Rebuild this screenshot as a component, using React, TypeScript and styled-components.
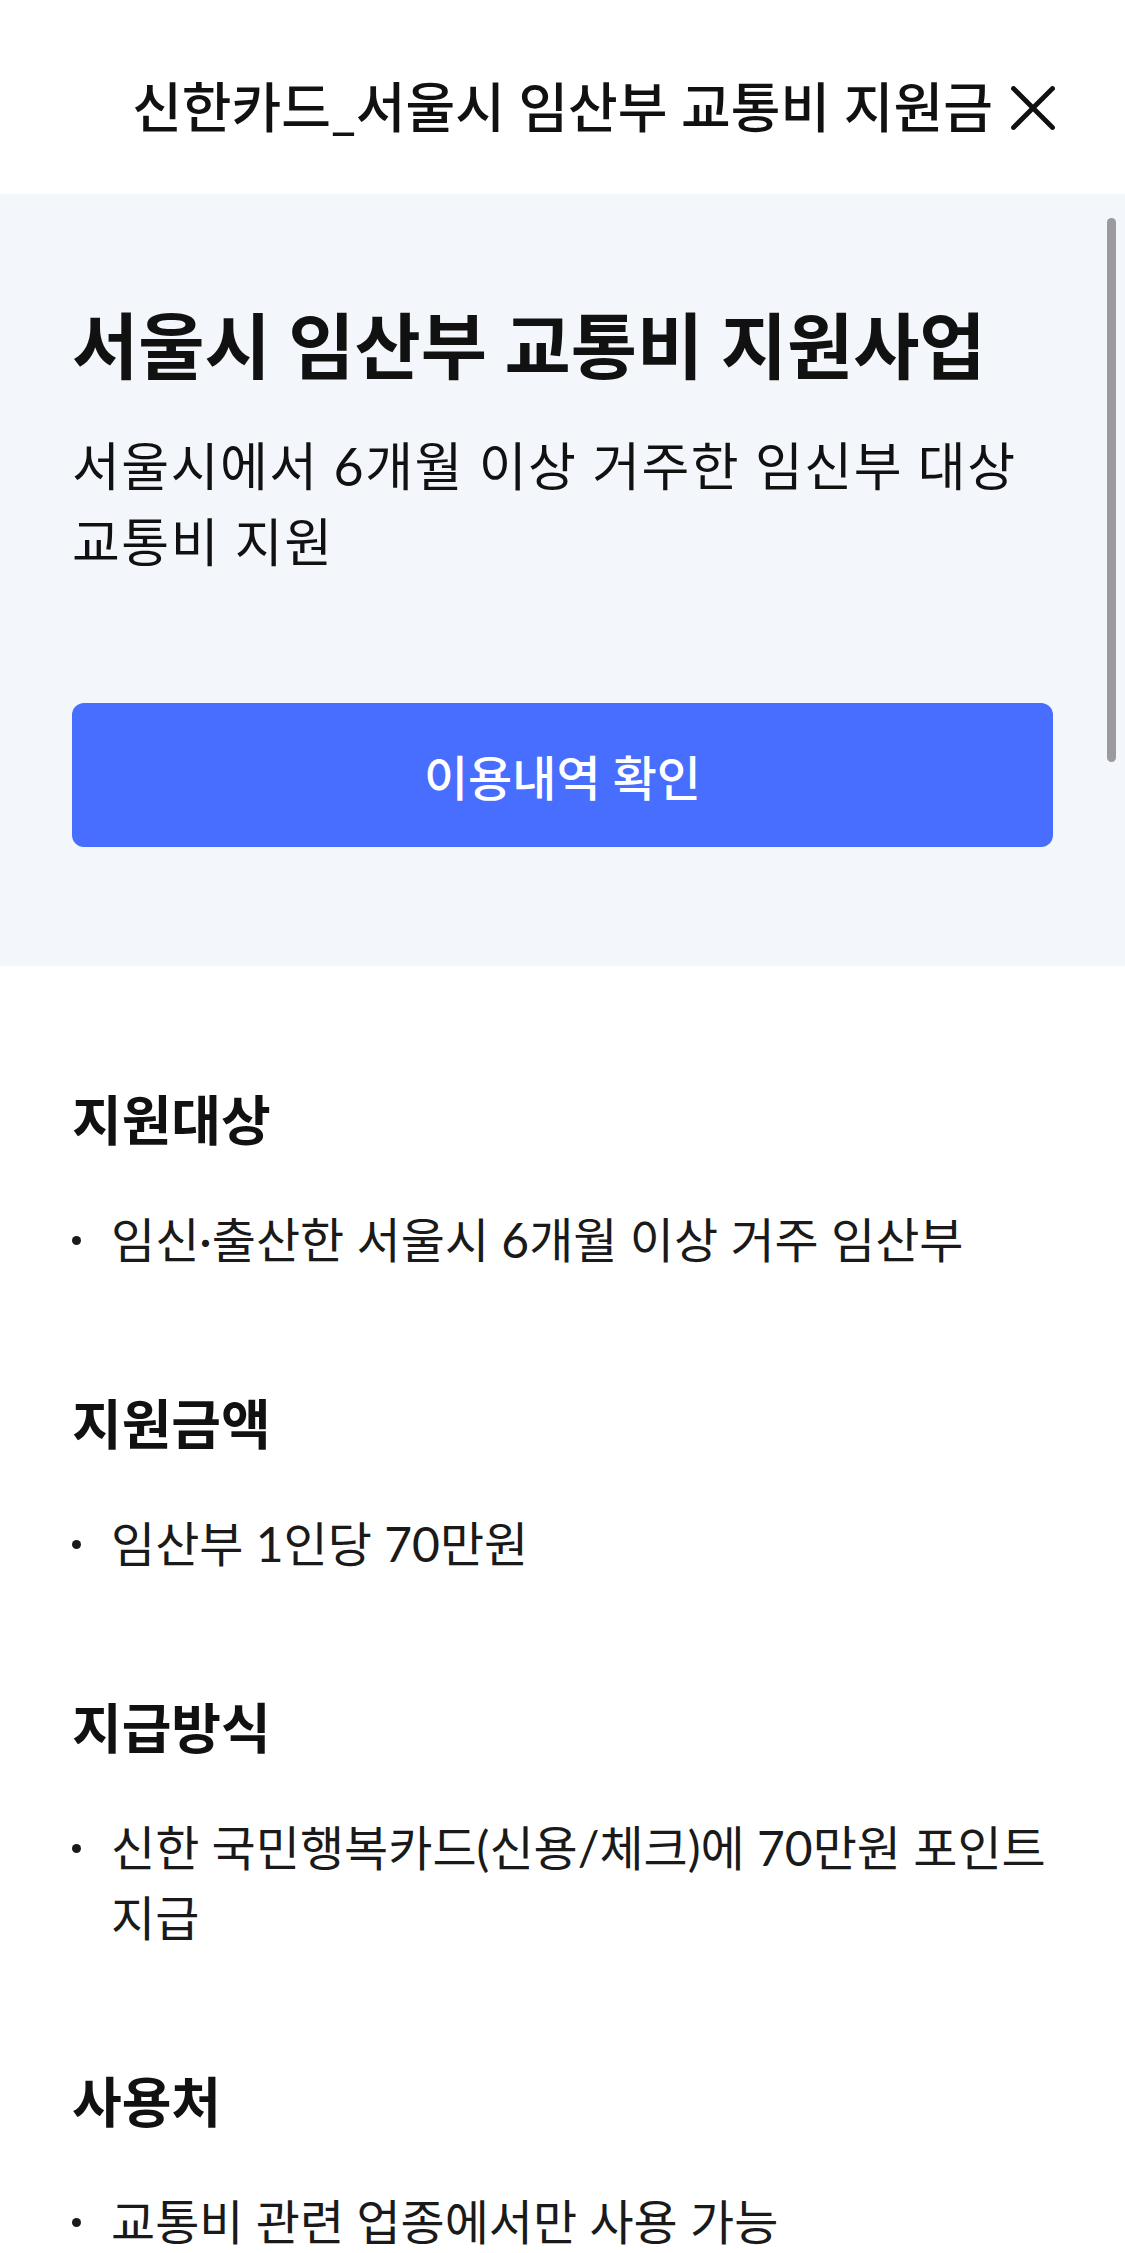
import React from 'react';
import styled, { createGlobalStyle } from 'styled-components';

// styles
const GlobalStyle = createGlobalStyle`
  html, body {
    margin: 0;
    padding: 0;
    overflow: hidden;
    background: #ffffff;
  }
  body {
    font-family: Lato, 'Noto Sans CJK KR', 'Noto Sans', sans-serif;
    color: #111111;
    word-break: keep-all;
    -webkit-font-smoothing: antialiased;
  }
  * {
    box-sizing: border-box;
  }
`;

const Page = styled.main`
  position: relative;
  width: 1125px;
  min-height: 2253px;
  background: #ffffff;
`;

const Header = styled.header`
  display: grid;
  grid-template-columns: 1fr auto 1fr;
  align-items: center;
  height: 194px;
  padding-top: 22px;
  background: #ffffff;
`;

const HeaderTitle = styled.h1`
  grid-column: 2;
  margin: 0;
  font-size: 54px;
  line-height: 70px;
  font-weight: 500;
  color: #111111;
  white-space: nowrap;
`;

const CloseButton = styled.button`
  grid-column: 3;
  justify-self: end;
  display: flex;
  align-items: center;
  justify-content: center;
  margin-right: 70px;
  padding: 0;
  border: none;
  background: transparent;
  cursor: pointer;
`;

const Hero = styled.section`
  display: flex;
  flex-direction: column;
  padding: 104px 72px 119px;
  background: #f3f6fb;
`;

const HeroTitle = styled.h2`
  margin: 0;
  font-size: 72px;
  line-height: 94px;
  font-weight: 700;
  color: #111111;
`;

const HeroText = styled.p`
  margin: 36px 0 0;
  font-size: 52px;
  line-height: 76px;
  letter-spacing: 1.5px;
  font-weight: 400;
  color: #111111;
`;

const PrimaryButton = styled.button`
  margin-top: 123px;
  width: 100%;
  height: 144px;
  border: none;
  border-radius: 12px;
  background: #486eff;
  color: #ffffff;
  font-family: inherit;
  font-size: 48px;
  font-weight: 500;
  cursor: pointer;
`;

const Content = styled.div`
  display: flex;
  flex-direction: column;
  gap: 115px;
  padding: 120px 72px 80px;
`;

const Section = styled.section`
  display: flex;
  flex-direction: column;
  gap: 49px;
`;

const SectionTitle = styled.h3`
  margin: 0;
  font-size: 54px;
  line-height: 70px;
  font-weight: 700;
  color: #111111;
`;

const List = styled.ul`
  margin: 0;
  padding: 0;
  list-style: none;
`;

const Item = styled.li`
  display: flex;
  font-size: 48px;
  line-height: 70px;
  font-weight: 400;
  color: #1a1a1a;
`;

const Dot = styled.span`
  flex: 0 0 39px;
  display: flex;
  align-items: center;
  height: 70px;

  &::before {
    content: '';
    width: 9px;
    height: 9px;
    border-radius: 50%;
    background: #1a1a1a;
  }
`;

const ScrollThumb = styled.div`
  position: absolute;
  top: 218px;
  right: 9px;
  width: 9px;
  height: 544px;
  border-radius: 5px;
  background: #9b9b9f;
`;

const sections = [
  { title: '지원대상', items: ['임신·출산한 서울시 6개월 이상 거주 임산부'] },
  { title: '지원금액', items: ['임산부 1인당 70만원'] },
  { title: '지급방식', items: ['신한 국민행복카드(신용/체크)에 70만원 포인트 지급'] },
  { title: '사용처', items: ['교통비 관련 업종에서만 사용 가능'] },
];

const CloseIcon = () => (
  <svg width="44" height="44" viewBox="0 0 44 44" fill="none">
    <path d="M2.5 2.5L41.5 41.5M41.5 2.5L2.5 41.5" stroke="#111111" strokeWidth="4.8" strokeLinecap="round" />
  </svg>
);

// markup
const App = () => {
  return (
    <Page>
      <GlobalStyle />
      <Header>
        <HeaderTitle>신한카드_서울시 임산부 교통비 지원금</HeaderTitle>
        <CloseButton aria-label="닫기">
          <CloseIcon />
        </CloseButton>
      </Header>
      <Hero>
        <HeroTitle>서울시 임산부 교통비 지원사업</HeroTitle>
        <HeroText>서울시에서 6개월 이상 거주한 임신부 대상 교통비 지원</HeroText>
        <PrimaryButton>이용내역 확인</PrimaryButton>
      </Hero>
      <Content>
        {sections.map((section) => (
          <Section key={section.title}>
            <SectionTitle>{section.title}</SectionTitle>
            <List>
              {section.items.map((item) => (
                <Item key={item}>
                  <Dot />
                  <span>{item}</span>
                </Item>
              ))}
            </List>
          </Section>
        ))}
      </Content>
      <ScrollThumb />
    </Page>
  );
};

export default App;
